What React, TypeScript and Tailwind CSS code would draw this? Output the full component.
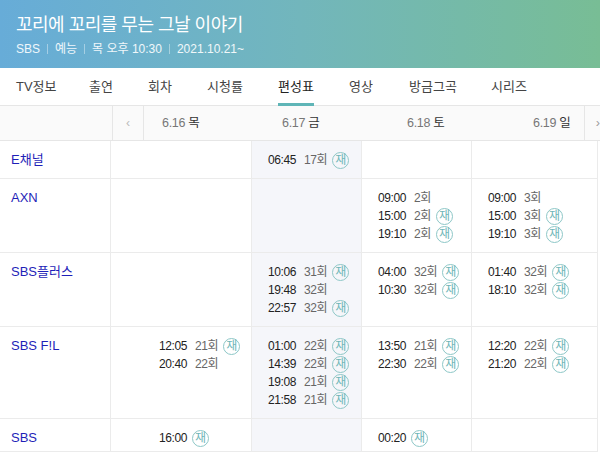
import React from 'react';

type Entry = [string, string, boolean];

const tabs = ['TV정보', '출연', '회차', '시청률', '편성표', '영상', '방금그곡', '시리즈'];
const tabW = ['w-[89px] pl-[16px]', 'w-[59px]', 'w-[59px]', 'w-[71px]', 'w-[71px]', 'w-[60px]', 'w-[82px]', 'w-[60px]'];

const rows: { name: string; h: string; cells: Entry[][] }[] = [
  { name: 'E채널', h: 'h-[38px]', cells: [[], [['06:45', '17회', true]], [], []] },
  {
    name: 'AXN',
    h: 'h-[74px]',
    cells: [
      [],
      [],
      [['09:00', '2회', false], ['15:00', '2회', true], ['19:10', '2회', true]],
      [['09:00', '3회', false], ['15:00', '3회', true], ['19:10', '3회', true]],
    ],
  },
  {
    name: 'SBS플러스',
    h: 'h-[74px]',
    cells: [
      [],
      [['10:06', '31회', true], ['19:48', '32회', false], ['22:57', '32회', true]],
      [['04:00', '32회', true], ['10:30', '32회', true]],
      [['01:40', '32회', true], ['18:10', '32회', true]],
    ],
  },
  {
    name: 'SBS F!L',
    h: 'h-[92px]',
    cells: [
      [['12:05', '21회', true], ['20:40', '22회', false]],
      [['01:00', '22회', true], ['14:39', '22회', true], ['19:08', '21회', true], ['21:58', '21회', true]],
      [['13:50', '21회', true], ['22:30', '22회', true]],
      [['12:20', '22회', true], ['21:20', '22회', true]],
    ],
  },
  { name: 'SBS', h: 'h-[33px]', cells: [[['16:00', '', true]], [], [['00:20', '', true]], []] },
];

const colCls = [
  'w-[141px] pl-[48px]',
  'w-[110px] pl-[16px] bg-[#f5f6fa]',
  'w-[110px] pl-[16px]',
  'w-[126px] pl-[16px]',
];

const dates = [
  ['6.16', '목', 'w-[138px] pl-[18px]'],
  ['6.17', '금', 'w-[125px]'],
  ['6.18', '토', 'w-[126px]'],
  ['6.19', '일', 'w-[51px]'],
];

const Badge = () => (
  <span className="ml-[5px] inline-flex h-[17px] w-[17px] items-center justify-center rounded-full border border-[#8dc7c7] text-[12px] leading-none text-[#6fb6b8]">
    재
  </span>
);

const Sep = () => <span className="mx-[7px] inline-block h-[10px] w-px bg-white/40" />;

export default function App() {
  return (
    <div className="w-[600px] h-[458px] overflow-hidden bg-white font-['Liberation_Sans','Noto_Sans_CJK_KR',sans-serif] text-[#222]">
      {/* title */}
      <div className="h-[68px] bg-gradient-to-r from-[#67acd8] via-[#72b6bc] to-[#78bd95] px-[16px] pt-[12px] text-white">
        <h1 className="text-[18px] leading-[26px] tracking-[-0.5px]">꼬리에 꼬리를 무는 그날 이야기</h1>
        <div className="mt-[2px] flex items-center text-[12px] leading-[18px] text-white/90">
          SBS<Sep />예능<Sep />목 오후 10:30<Sep />2021.10.21~
        </div>
      </div>

      {/* tabs */}
      <div className="flex h-[38px] items-center border-b border-[#e6e6e6]">
        {tabs.map((t, i) => (
          <div key={t} className={`flex h-full shrink-0 items-center whitespace-nowrap text-[13px] ${tabW[i]} ${t === '편성표' ? 'text-[#222]' : 'text-[#444]'}`}>
            <span className="relative flex h-full items-center">
              {t}
              {t === '편성표' && <span className="absolute bottom-[-1px] left-0 right-0 h-[3px] bg-[#5fb5b7]" />}
            </span>
          </div>
        ))}
      </div>

      {/* dates */}
      <div className="flex h-[35px] items-center border-b border-[#e6e6e6] bg-[#fafafa] text-[12.5px]">
        <div className="w-[112px] shrink-0" />
        <div className="flex h-full w-[32px] shrink-0 items-center justify-center border-x border-[#e6e6e6] text-[#bbb]">‹</div>
        {dates.map(([d, w, cls]) => (
          <span key={d} className={`shrink-0 whitespace-nowrap tracking-[-0.3px] text-[#777] ${cls}`}>
            {d} <span className="text-[#333]">{w}</span>
          </span>
        ))}
        <div className="flex h-full flex-1 items-center justify-end border-l border-[#e6e6e6] text-[#999]">›</div>
      </div>

      {/* schedule */}
      {rows.map((r) => (
        <div key={r.name} className={`flex ${r.h}`}>
          <div className="w-[111px] shrink-0 border-r border-b border-[#ebebeb] pl-[11px] pt-[10px] text-[13px] leading-[18px] text-[#1f1fb8]">
            {r.name}
          </div>
          {r.cells.map((c, ci) => (
            <div key={ci} className={`shrink-0 border-r border-b border-[#ebebeb] pt-[10px] ${colCls[ci]}`}>
              {c.map(([time, ep, re], k) => (
                <div key={k} className="flex h-[18px] items-center whitespace-nowrap text-[12px]">
                  <span className="tracking-[-0.4px] text-[#222]">{time}</span>
                  {ep && <span className="ml-[8px] tracking-[-0.4px] text-[#666]">{ep}</span>}
                  {re && <Badge />}
                </div>
              ))}
            </div>
          ))}
        </div>
      ))}
    </div>
  );
}
